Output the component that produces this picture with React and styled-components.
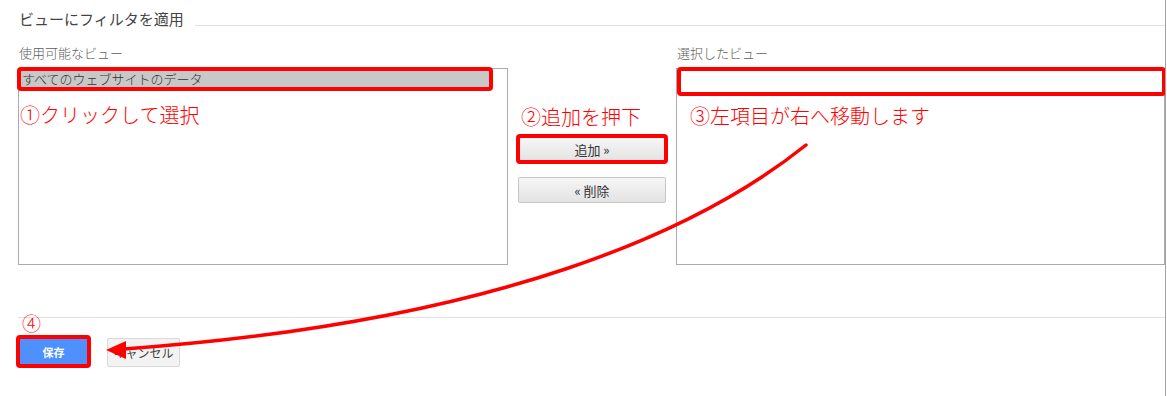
import React from "react";
import styled, { createGlobalStyle, css } from "styled-components";

const GlobalStyle = createGlobalStyle`
  body {
    margin: 0;
    background: #fff;
    font-family: "Noto Sans CJK JP", "Noto Sans", sans-serif;
  }
`;

const marked = css`
  outline: 4px solid #ff0000;
  outline-offset: -2px;
  border-radius: 2px;
`;

const Page = styled.div`
  position: relative;
  box-sizing: border-box;
  width: 1166px;
  height: 396px;
  padding-left: 18px;
  border-right: 1px solid #a3a3a3;
  background: #fff;
  overflow: hidden;
`;

const TitleRow = styled.div`
  display: flex;
  align-items: flex-start;
  padding-top: 9px;
`;

const Title = styled.h2`
  margin: 0 0 0 1px;
  font-size: 15px;
  line-height: 20px;
  font-weight: 400;
  color: #444;
`;

const Rule = styled.div`
  flex: 1;
  height: 1px;
  margin: 16px 0 0 11px;
  background: #e0e0e0;
`;

const Columns = styled.div`
  display: flex;
  margin-top: 16px;
`;

const Column = styled.div`
  display: flex;
  flex-direction: column;
  width: ${(p) => p.$width || "auto"};
  flex: ${(p) => (p.$grow ? 1 : "none")};
  margin-left: ${(p) => p.$gap || "0"};
`;

const Label = styled.div`
  font-size: 13px;
  line-height: 16px;
  font-weight: 300;
  color: #5e5e5e;
  margin-bottom: 7px;
  padding-left: 1px;
`;

const ListBox = styled.div`
  box-sizing: border-box;
  height: 197px;
  border: 1px solid #ababab;
  background: #fff;
`;

const Item = styled.div`
  height: 20px;
  margin-right: 16px;
  padding-left: 3px;
  line-height: 20px;
  font-size: 13px;
  font-weight: 300;
  color: #333;
  background: #c8c8c8;
  ${(p) => p.$marked && marked}
`;

const Slot = styled.div`
  height: 25px;
  margin-left: 2px;
  ${marked}
`;

const Note = styled.div`
  font-size: 20px;
  line-height: 26px;
  font-weight: 300;
  color: #ff0000;
  white-space: nowrap;
  margin-top: ${(p) => p.$top || "0"};
  padding-left: ${(p) => p.$left || "0"};
`;

const Middle = styled.div`
  display: flex;
  flex-direction: column;
  width: 148px;
  margin-left: 10px;
  padding-top: 59px;
`;

const MoveButton = styled.button`
  box-sizing: border-box;
  height: 26px;
  margin-top: ${(p) => p.$top};
  border: 1px solid #c6c6c6;
  border-radius: 2px;
  background: linear-gradient(#f6f6f6, #e3e3e3);
  font-family: inherit;
  font-size: 13px;
  font-weight: 400;
  color: #333;
  cursor: pointer;
  ${(p) => p.$marked && marked}
`;

const Footer = styled.div`
  position: relative;
  margin-top: 52px;
  border-top: 1px solid #e0e0e0;
`;

const Step = styled.span`
  position: absolute;
  left: 4px;
  top: -6px;
  font-size: 19px;
  line-height: 22px;
  font-weight: 300;
  color: #ff0000;
`;

const Actions = styled.div`
  display: flex;
  gap: 18px;
  align-items: flex-start;
  margin-top: 19px;
`;

const SaveButton = styled.button`
  box-sizing: border-box;
  width: 71px;
  height: 29px;
  border: 1px solid #3079ed;
  border-radius: 2px;
  background: #4d90fe;
  color: #fff;
  font-family: inherit;
  font-size: 11px;
  font-weight: 700;
  ${marked}
`;

const CancelButton = styled.button`
  box-sizing: border-box;
  width: 73px;
  height: 29px;
  margin-top: 1px;
  padding: 0;
  white-space: nowrap;
  border: 1px solid #d9d9d9;
  border-radius: 2px;
  background: #f3f3f3;
  color: #444;
  font-family: inherit;
  font-size: 12px;
`;

const Arrow = styled.svg`
  position: absolute;
  left: 0;
  top: 0;
  pointer-events: none;
`;

export default function App() {
  return (
    <>
      <GlobalStyle />
      <Page>
        <TitleRow>
          <Title>ビューにフィルタを適用</Title>
          <Rule />
        </TitleRow>
        <Columns>
          <Column $width="490px">
            <Label>使用可能なビュー</Label>
            <ListBox>
              <Item $marked>すべてのウェブサイトのデータ</Item>
              <Note $top="13px" $left="1px">①クリックして選択</Note>
            </ListBox>
          </Column>
          <Middle>
            <Note $left="3px">②追加を押下</Note>
            <MoveButton $top="6px" $marked>追加 »</MoveButton>
            <MoveButton $top="15px">« 削除</MoveButton>
          </Middle>
          <Column $grow $gap="10px">
            <Label>選択したビュー</Label>
            <ListBox>
              <Slot />
              <Note $top="9px" $left="13px">③左項目が右へ移動します</Note>
            </ListBox>
          </Column>
        </Columns>
        <Footer>
          <Step>④</Step>
          <Actions>
            <SaveButton>保存</SaveButton>
            <CancelButton>キャンセル</CancelButton>
          </Actions>
        </Footer>
        <Arrow width="1167" height="396" viewBox="0 0 1167 396">
          <path
            d="M806,145 C700,230 500,322 124,349"
            fill="none"
            stroke="#ff0000"
            strokeWidth="3.5"
            strokeLinecap="round"
          />
          <polygon points="106,350 126,341 126,359" fill="#ff0000" />
        </Arrow>
      </Page>
    </>
  );
}
